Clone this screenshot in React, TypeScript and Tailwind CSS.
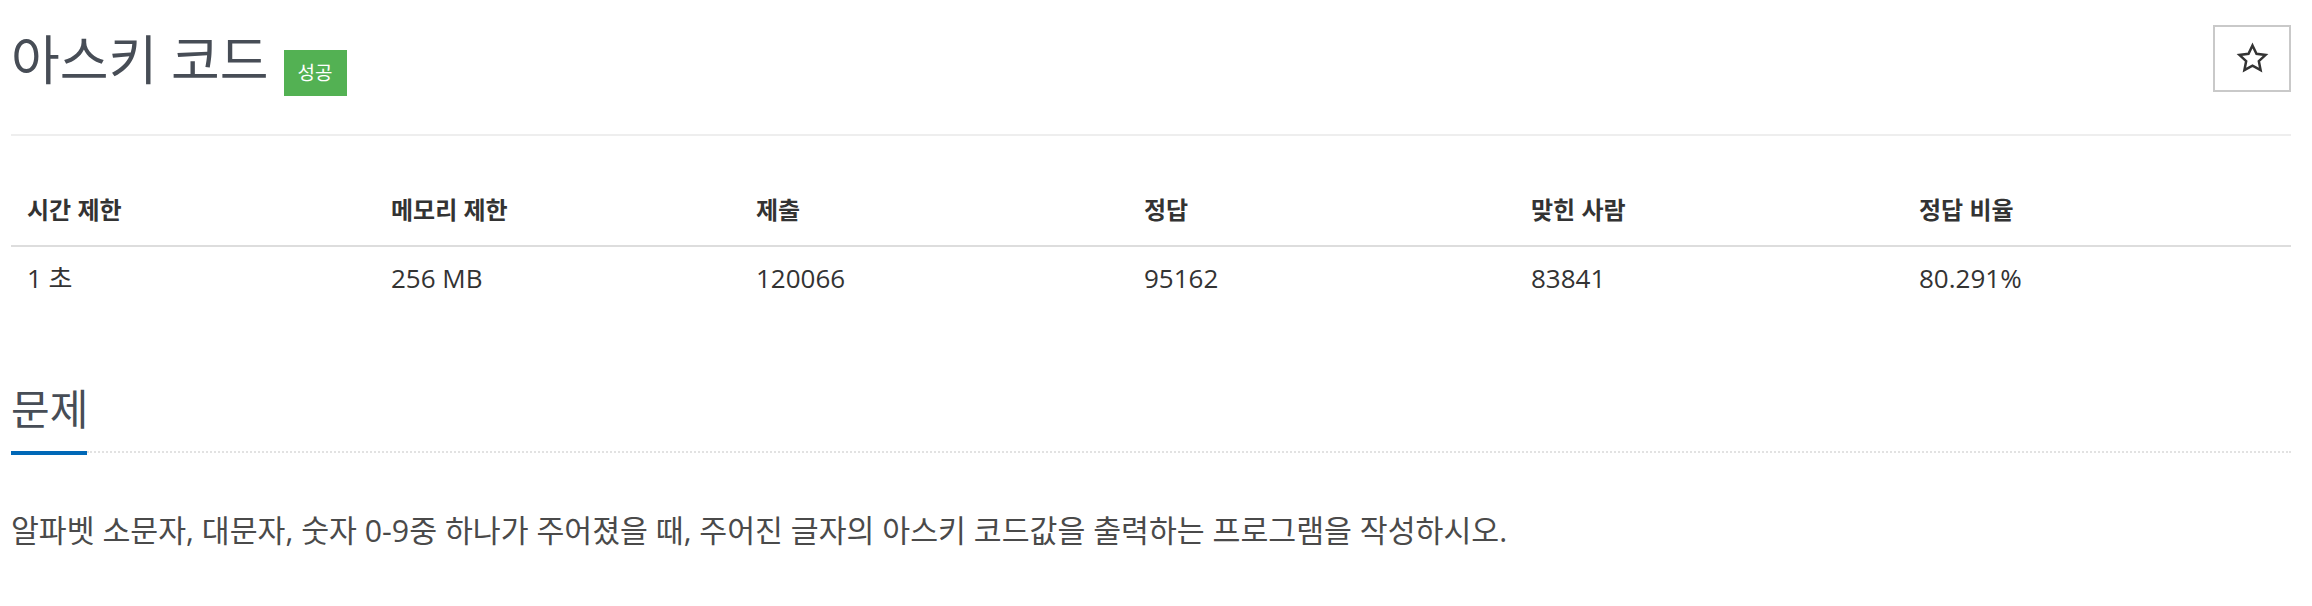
import React from 'react'

const stats = [
  { label: '시간 제한', value: '1 초' },
  { label: '메모리 제한', value: '256 MB' },
  { label: '제출', value: '120066' },
  { label: '정답', value: '95162' },
  { label: '맞힌 사람', value: '83841' },
  { label: '정답 비율', value: '80.291%' },
]

function StarIcon() {
  return (
    <svg width="33" height="33" viewBox="0 0 24 24" fill="none" stroke="#333" strokeWidth="1.8" strokeLinejoin="miter">
      <polygon points="12,2.5 14.9,8.6 21.5,9.4 16.6,13.9 17.9,20.5 12,17.2 6.1,20.5 7.4,13.9 2.5,9.4 9.1,8.6" />
    </svg>
  )
}

export default function App() {
  return (
    <div className="min-h-screen bg-white pl-[11px] pr-[21px] font-['Open_Sans','Noto_Sans_CJK_KR',sans-serif]">
      {/* header */}
      <div className="flex items-start justify-between pt-[25px]">
        <div className="flex items-start">
          <h1 className="mt-[8px] text-[53px] leading-none font-normal text-[#474d56]">아스키 코드</h1>
          <span className="ml-[15px] mt-[25px] flex h-[46px] items-center bg-[#53b153] px-[14px] text-[19px] text-white">
            성공
          </span>
        </div>
        <button className="flex h-[67px] w-[78px] items-center justify-center border-2 border-[#c9c9c9] bg-white">
          <StarIcon />
        </button>
      </div>

      <div className="mt-[38px] h-[2px] bg-[#eeeeee]" />

      {/* stats table */}
      <div className="mt-[39px] grid grid-cols-[364px_365px_388px_387px_388px_388px] text-[#333]">
        {stats.map((s) => (
          <div key={s.label} className="border-b-2 border-[#dddddd] py-[16px] pl-[16px] text-[24px] font-bold leading-[38px]">
            {s.label}
          </div>
        ))}
        {stats.map((s) => (
          <div key={s.value} className="py-[12px] pl-[16px] text-[26px] leading-[38px]">
            {s.value}
          </div>
        ))}
      </div>

      {/* problem section */}
      <h2 className="mt-[79px] text-[42px] leading-none font-normal text-[#474d56]">문제</h2>
      <div className="mt-[21px] flex items-start">
        <div className="h-[4px] w-[76px] bg-[#0068b7]" />
        <div className="flex-1 border-t-2 border-dotted border-[#e2e2e2]" />
      </div>
      <p className="mt-[55px] text-[30.3px] leading-[42px] text-[#4a4a4a]">
        알파벳 소문자, 대문자, 숫자 0-9중 하나가 주어졌을 때, 주어진 글자의 아스키 코드값을 출력하는 프로그램을 작성하시오.
      </p>
    </div>
  )
}
